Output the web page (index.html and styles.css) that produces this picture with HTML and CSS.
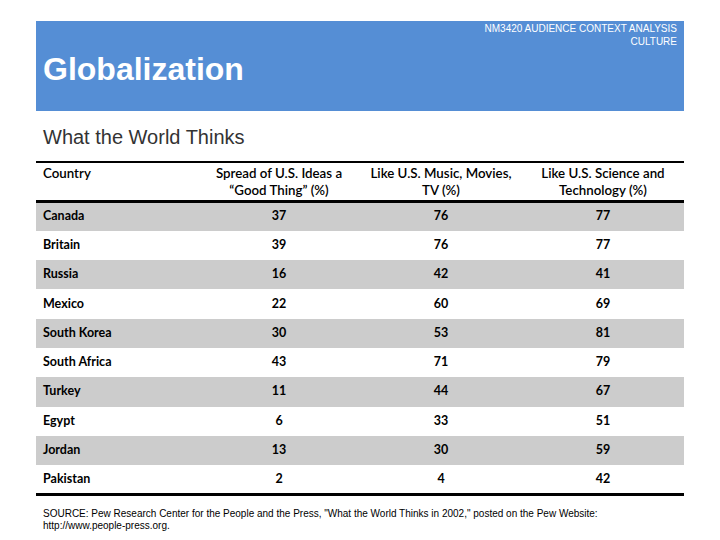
FILE: index.html
```html
<!DOCTYPE html>
<html>
<head>
<meta charset="utf-8">
<link rel="stylesheet" href="styles.css">
</head>
<body>
<div class="page">
  <header class="banner">
    <div class="course">NM3420 AUDIENCE CONTEXT ANALYSIS<br>CULTURE</div>
    <h1 class="title">Globalization</h1>
  </header>
  <h2 class="subtitle">What the World Thinks</h2>
  <table class="data">
    <thead>
      <tr>
        <th class="country">Country</th>
        <th>Spread of U.S. Ideas a<br>“Good Thing” (%)</th>
        <th>Like U.S. Music, Movies,<br>TV (%)</th>
        <th>Like U.S. Science and<br>Technology (%)</th>
      </tr>
    </thead>
    <tbody>
      <tr class="shade"><td class="country">Canada</td><td>37</td><td>76</td><td>77</td></tr>
      <tr><td class="country">Britain</td><td>39</td><td>76</td><td>77</td></tr>
      <tr class="shade"><td class="country">Russia</td><td>16</td><td>42</td><td>41</td></tr>
      <tr><td class="country">Mexico</td><td>22</td><td>60</td><td>69</td></tr>
      <tr class="shade"><td class="country">South Korea</td><td>30</td><td>53</td><td>81</td></tr>
      <tr><td class="country">South Africa</td><td>43</td><td>71</td><td>79</td></tr>
      <tr class="shade"><td class="country">Turkey</td><td>11</td><td>44</td><td>67</td></tr>
      <tr><td class="country">Egypt</td><td>6</td><td>33</td><td>51</td></tr>
      <tr class="shade"><td class="country">Jordan</td><td>13</td><td>30</td><td>59</td></tr>
      <tr><td class="country">Pakistan</td><td>2</td><td>4</td><td>42</td></tr>
    </tbody>
  </table>
  <p class="source">SOURCE: Pew Research Center for the People and the Press, "What the World Thinks in 2002," posted on the Pew Website:<br>http://www.people-press.org.</p>
</div>
</body>
</html>
```
FILE: styles.css
```css
html, body {
  margin: 0;
  padding: 0;
  background: #ffffff;
}
.page {
  width: 648px;
  padding: 21px 36px 0 36px;
  font-family: "Liberation Sans", Arial, sans-serif;
}
.banner {
  background: #558ed5;
  height: 90px;
  box-sizing: border-box;
  padding: 1px 7px 0 7px;
  color: #ffffff;
}
.course {
  text-align: right;
  font-size: 10px;
  line-height: 13px;
}
.title {
  margin: 1px 0 0 0;
  font-size: 32px;
  font-weight: bold;
  line-height: 40px;
}
.subtitle {
  margin: 14px 0 0 7px;
  font-size: 20px;
  font-weight: normal;
  line-height: 24px;
  color: #333333;
}
.data {
  margin-top: 12px;
  width: 648px;
  border-collapse: collapse;
  table-layout: fixed;
  font-family: Lato, "Open Sans", sans-serif;
  font-size: 12.5px;
  color: #000000;
  border-top: 2px solid #000000;
  border-bottom: 3px solid #000000;
}
.data th {
  font-size: 13.3px;
  font-weight: 600;
  text-align: center;
  vertical-align: top;
  padding: 2px 4px 1px 4px;
  line-height: 17px;
  border-bottom: 3px solid #000000;
}
.data td {
  font-weight: 700;
  text-align: center;
  height: 29.3px;
  padding: 0 4px 2px 4px;
  box-sizing: border-box;
}
.data .country {
  text-align: left;
  padding-left: 7px;
}
.data tr.shade td {
  background: #cccccc;
}
.source {
  margin: 12px 0 0 7px;
  font-size: 10px;
  line-height: 12px;
  color: #000000;
}
```
